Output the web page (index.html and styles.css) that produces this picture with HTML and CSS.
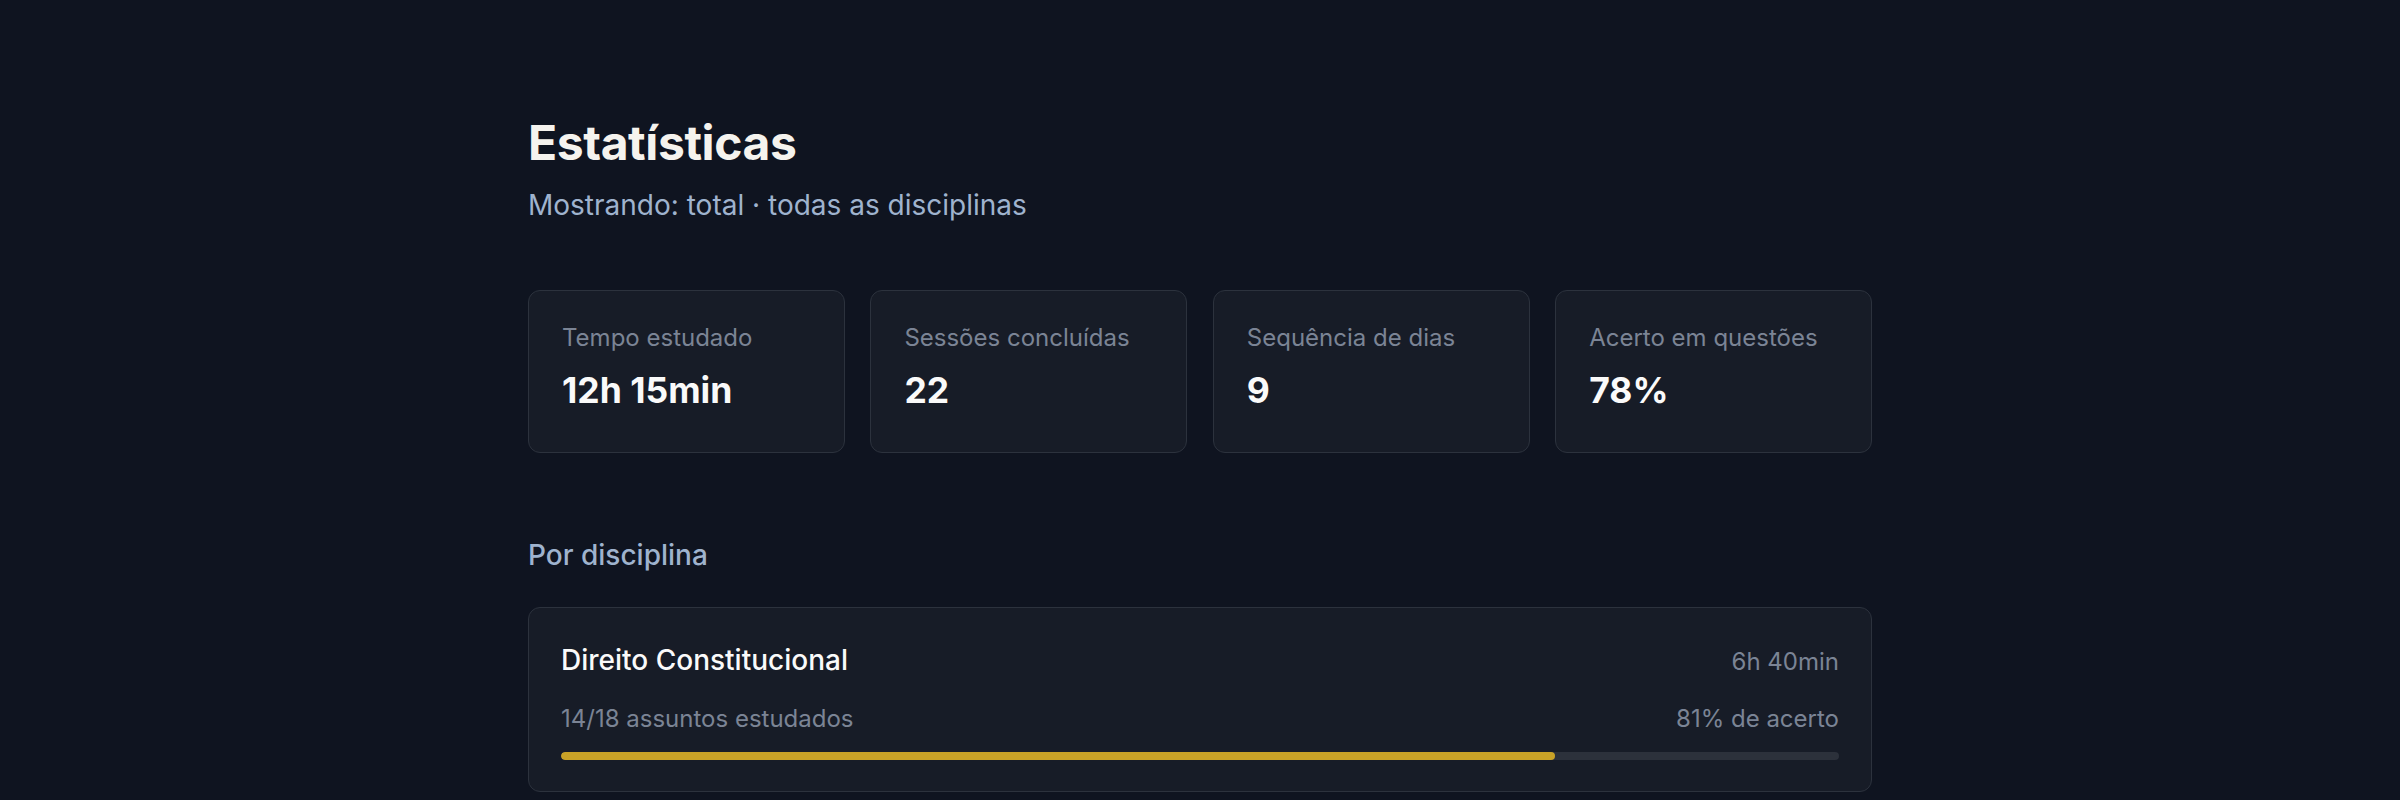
FILE: index.html
```html
<!DOCTYPE html>
<html lang="pt-BR">
  <head>
    <meta charset="UTF-8" />
    <meta name="viewport" content="width=device-width, initial-scale=1.0" />
    <title>Estatísticas</title>
    <link rel="stylesheet" href="styles.css">
  </head>
  <body>
    <main class="stats-page">
      <!-- cabeçalho -->
      <header class="stats-header">
        <h1>Estatísticas</h1>
        <p>Mostrando: total · todas as disciplinas</p>
      </header>

      <!-- resumo geral -->
      <section class="summary-grid">
        <div class="summary-card">
          <div class="summary-label">Tempo estudado</div>
          <div class="summary-value">12h 15min</div>
        </div>
        <div class="summary-card">
          <div class="summary-label">Sessões concluídas</div>
          <div class="summary-value">22</div>
        </div>
        <div class="summary-card">
          <div class="summary-label">Sequência de dias</div>
          <div class="summary-value">9</div>
        </div>
        <div class="summary-card">
          <div class="summary-label">Acerto em questões</div>
          <div class="summary-value">78%</div>
        </div>
      </section>

      <!-- por disciplina -->
      <section class="subjects">
        <h2>Por disciplina</h2>

        <div class="subject-card">
          <div class="subject-row">
            <span class="subject-name">Direito Constitucional</span>
            <span class="subject-time">6h 40min</span>
          </div>
          <div class="subject-row subject-meta">
            <span>14/18 assuntos estudados</span>
            <span>81% de acerto</span>
          </div>
          <div class="progress">
            <div class="progress-fill" style="width: 77.78%"></div>
          </div>
        </div>
      </section>
    </main>
  </body>
</html>
```

FILE: styles.css
```css
:root {
  --background: #0f1420;
  --card: #171c27;
  --border: #2c323d;
  --text: #f5f3ee;
  --text-secondary: #9fb3ce;
  --muted: #7b8495;
  --accent: #c9a227;
  --track: #2c313b;
}

* {
  margin: 0;
  padding: 0;
  box-sizing: border-box;
}

body {
  background: var(--background);
  color: var(--text);
  font-family: Inter, "Noto Sans", "Liberation Sans", sans-serif;
  height: 100vh;
  overflow: hidden;
}

.stats-page {
  width: 1344px;
  margin: 0 auto;
  padding-top: 114px;
}

/* cabeçalho */
.stats-header h1 {
  font-size: 48px;
  font-weight: 700;
  line-height: 1.2;
  letter-spacing: -0.4px;
}

.stats-header p {
  margin-top: 12px;
  font-size: 28px;
  line-height: 42px;
  color: var(--text-secondary);
}

/* resumo */
.summary-grid {
  display: grid;
  grid-template-columns: repeat(4, 1fr);
  gap: 25.6px;
  margin-top: 64px;
}

.summary-card {
  background: var(--card);
  border: 1.5px solid var(--border);
  border-radius: 12px;
  padding: 29px 33px 37px;
}

.summary-label {
  font-size: 24px;
  line-height: 36px;
  color: var(--muted);
}

.summary-value {
  margin-top: 11px;
  font-size: 35.5px;
  font-weight: 700;
  line-height: 48px;
  color: #fafafa;
}

/* disciplinas */
.subjects {
  margin-top: 80px;
}

.subjects h2 {
  font-size: 28px;
  font-weight: 500;
  line-height: 44px;
  color: var(--text-secondary);
}

.subject-card {
  margin-top: 30px;
  background: var(--card);
  border: 1.5px solid var(--border);
  border-radius: 12px;
  padding: 32.5px 32px 31px;
}

.subject-row {
  display: flex;
  justify-content: space-between;
  align-items: baseline;
}

.subject-name {
  font-size: 28px;
  font-weight: 500;
  line-height: 40px;
  color: #fafafa;
}

.subject-time {
  font-size: 24px;
  color: var(--muted);
}

.subject-meta {
  margin-top: 21px;
  font-size: 24px;
  line-height: 36px;
  color: var(--muted);
}

.progress {
  margin-top: 15px;
  height: 8px;
  border-radius: 4px;
  background: var(--track);
  overflow: hidden;
}

.progress-fill {
  height: 100%;
  border-radius: 4px;
  background: var(--accent);
}
```
